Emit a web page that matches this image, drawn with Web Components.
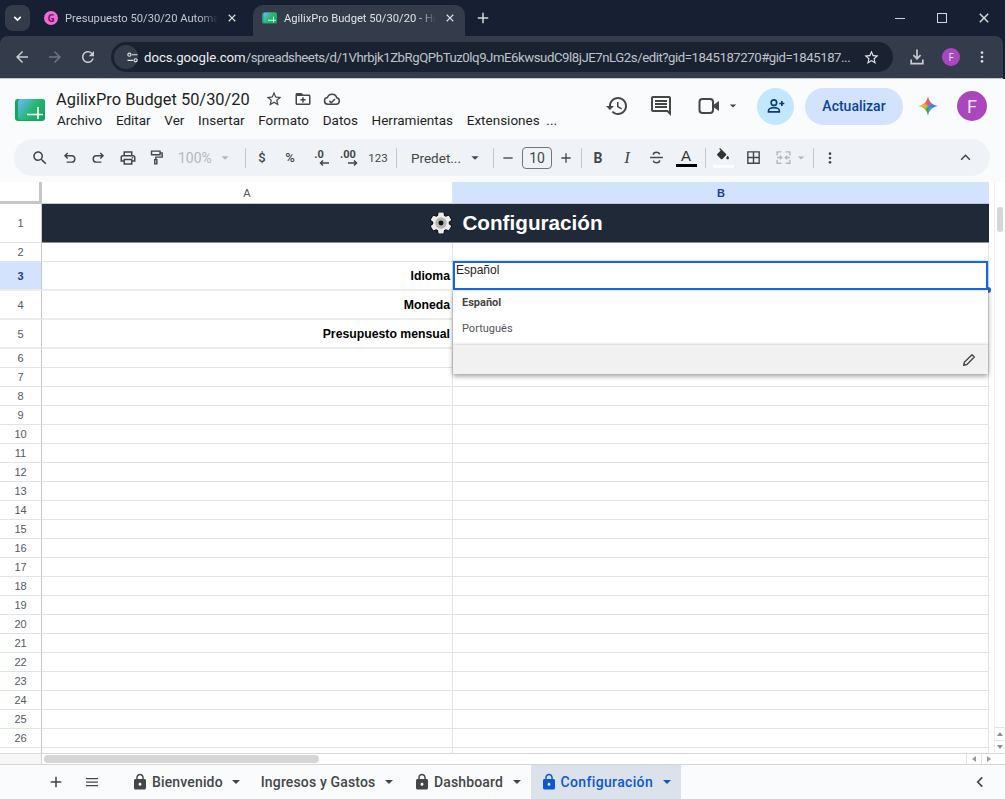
<!DOCTYPE html>
<html lang="es">
<head>
<meta charset="utf-8">
<title>AgilixPro Budget</title>
<style>
  html, body { margin: 0; height: 100%; overflow: hidden; background: #fff; }
  body { display: flex; flex-direction: column; height: 799px; font-family: Roboto, "Liberation Sans", sans-serif; }
</style>
</head>
<body>
<x-browser-tabs></x-browser-tabs>
<x-browser-toolbar></x-browser-toolbar>
<x-doc-header></x-doc-header>
<x-sheet-toolbar></x-sheet-toolbar>
<x-grid></x-grid>
<x-sheet-tabs></x-sheet-tabs>

<script>
const ICONS = {
  star: '<path d="M22 9.24l-7.19-.62L12 2 9.19 8.63 2 9.24l5.46 4.73L5.82 21 12 17.27 18.18 21l-1.63-7.03L22 9.24zM12 15.4l-3.76 2.27 1-4.28-3.32-2.88 4.38-.38L12 6.1l1.71 4.04 4.38.38-3.32 2.88 1 4.28L12 15.4z"/>',
  search: '<path d="M15.5 14h-.79l-.28-.27C15.41 12.59 16 11.11 16 9.5 16 5.91 13.09 3 9.5 3S3 5.91 3 9.5 5.91 16 9.5 16c1.61 0 3.09-.59 4.23-1.57l.27.28v.79l5 4.99L20.49 19l-4.99-5zm-6 0C7.01 14 5 11.99 5 9.5S7.01 5 9.5 5 14 7.01 14 9.5 11.99 14 9.5 14z"/>',
  undo: '<path fill="none" stroke="currentColor" stroke-width="2" d="M9.5 5.5 5.5 9.5l4 4M5.5 9.5H15a4.5 4.5 0 0 1 0 9H8"/>',
  redo: '<path fill="none" stroke="currentColor" stroke-width="2" d="M14.5 5.5l4 4-4 4M18.5 9.5H9a4.5 4.5 0 0 0 0 9h7"/>',
  print: '<path d="M19 8h-1V3H6v5H5c-1.66 0-3 1.34-3 3v6h4v4h12v-4h4v-6c0-1.66-1.34-3-3-3zM8 5h8v3H8V5zm8 12v2H8v-4h8v2zm2-2v-2H6v2H4v-4c0-.55.45-1 1-1h14c.55 0 1 .45 1 1v4h-2z"/><circle cx="18" cy="11.5" r="1"/>',
  paint: '<path fill="none" stroke="currentColor" stroke-width="2" d="M5 3h12v5H5zM17 5.5h3v6h-9V15M9.5 15h3v6h-3z"/>',
  history: '<path d="M13 3c-4.97 0-9 4.03-9 9H1l3.89 3.89.07.14L9 12H6c0-3.87 3.13-7 7-7s7 3.13 7 7-3.13 7-7 7c-1.93 0-3.68-.79-4.94-2.06l-1.42 1.42C8.27 19.99 10.51 21 13 21c4.97 0 9-4.03 9-9s-4.03-9-9-9zm-1 5v5l4.28 2.54.72-1.21-3.5-2.08V8H12z"/>',
  comment: '<path d="M21.99 4c0-1.1-.89-2-1.99-2H4c-1.1 0-2 .9-2 2v12c0 1.1.9 2 2 2h14l4 4-.01-18zM20 4v13.17L18.83 16H4V4h16zM6 12h12v2H6zm0-3h12v2H6zm0-3h12v2H6z"/>',
  video: '<rect x="2.5" y="5" width="13.5" height="14" rx="3" fill="none" stroke="currentColor" stroke-width="2"/><path d="M17 10.5l5-3.5v10l-5-3.5z"/>',
  addperson: '<circle cx="9.5" cy="8" r="3.3" fill="none" stroke="currentColor" stroke-width="2"/><path fill="none" stroke="currentColor" stroke-width="2" d="M3 19v-1.5c0-2 3.3-3.5 6.5-3.5s6.5 1.500 6.500 3.500V19zM19 6v6M16 9h6"/>',
  lock: '<path d="M18 8h-1V6c0-2.76-2.24-5-5-5S7 3.24 7 6v2H6c-1.1 0-2 .9-2 2v10c0 1.1.9 2 2 2h12c1.1 0 2-.9 2-2V10c0-1.1-.9-2-2-2zm-6 9c-1.1 0-2-.9-2-2s.9-2 2-2 2 .9 2 2-.9 2-2 2zm3.100-9H8.900V6c0-1.710 1.390-3.100 3.100-3.100 1.710 0 3.100 1.390 3.100 3.100v2z"/>',
  pencil: '<path fill="none" stroke="currentColor" stroke-width="2" stroke-linejoin="round" d="M4 20l1-4.500L16.500 4l3.500 3.500L8.500 19z"/><path d="M4 20l.8-3.600 2.800 2.800z"/>',
  menu: '<path d="M4 6.500h16v1.700H4zM4 11.200h16v1.700H4zM4 15.900h16v1.700H4z"/>',
  plus: '<path d="M19 13h-6v6h-2v-6H5v-2h6V5h2v6h6v2z"/>',
  minus: '<path d="M5 11h14v2H5z"/>',
  close: '<path d="M18.300 7.100l-1.400-1.400L12 10.600 7.100 5.700 5.700 7.100l4.900 4.900-4.900 4.900 1.400 1.400 4.900-4.900 4.900 4.900 1.400-1.400-4.900-4.900z"/>',
  down: '<path fill="none" stroke="currentColor" stroke-width="3" d="M6 9l6 6 6-6"/>',
  up: '<path fill="none" stroke="currentColor" stroke-width="2.500" d="M5 15.500l7-7 7 7"/>',
  left: '<path fill="none" stroke="currentColor" stroke-width="2.500" d="M15.500 5l-7 7 7 7"/>',
  back: '<path d="M20 11H7.830l5.590-5.590L12 4l-8 8 8 8 1.410-1.410L7.830 13H20v-2z"/>',
  forward: '<path d="M12 4l-1.410 1.410L16.170 11H4v2h12.170l-5.580 5.590L12 20l8-8z"/>',
  reload: '<path d="M17.650 6.350A7.958 7.958 0 0 0 12 4c-4.420 0-7.990 3.580-7.990 8s3.570 8 7.990 8c3.730 0 6.840-2.550 7.730-6h-2.080A5.990 5.990 0 0 1 12 18c-3.310 0-6-2.690-6-6s2.690-6 6-6c1.660 0 3.140.69 4.220 1.780L13 11h7V4l-2.350 2.350z"/>',
  tune: '<path fill="none" stroke="currentColor" stroke-width="1.800" d="M11 7.500h9M4 16.500h9"/><circle cx="7" cy="7.500" r="2.500" fill="none" stroke="currentColor" stroke-width="1.800"/><circle cx="17" cy="16.500" r="2.500" fill="none" stroke="currentColor" stroke-width="1.800"/>',
  download: '<path d="M12 15.500l-5-5 1.400-1.400 2.600 2.600V3h2v8.700l2.600-2.600 1.400 1.400z"/><path d="M4 15h2v4h12v-4h2v6H4z"/>',
  dots: '<circle cx="12" cy="5.500" r="2"/><circle cx="12" cy="12" r="2"/><circle cx="12" cy="18.500" r="2"/>',
  folder: '<path d="M20 6h-8l-2-2H4c-1.100 0-2 .9-2 2v12c0 1.100.9 2 2 2h16c1.100 0 2-.9 2-2V8c0-1.100-.9-2-2-2zm0 12H4V8h16v10zM11 9.500h2V12h2.500v2H13v2.500h-2V14H8.500v-2H11z"/>',
  cloud: '<path fill="none" stroke="currentColor" stroke-width="2" d="M6.500 19a4.500 4.500 0 0 1-.6-8.960A6.500 6.500 0 0 1 18.300 10.300 4.400 4.400 0 0 1 17.500 19z"/><path fill="none" stroke="currentColor" stroke-width="2" d="M8.500 14.500l2.500 2.500 5-5"/>',
  borders: '<path d="M3 3v18h18V3H3zm8 16H5v-6h6v6zm0-8H5V5h6v6zm8 8h-6v-6h6v6zm0-8h-6V5h6v6z"/>',
  merge: '<path fill="none" stroke="currentColor" stroke-width="2" d="M3 9V4h6M3 15v5h6M21 9V4h-6M21 15v5h-6M3 12h6m-2-2.500L9.500 12 7 14.500M21 12h-6m2-2.500L14.500 12l2.500 2.500"/>',
  fill: '<path d="M16.560 8.940L7.620 0 6.210 1.410l2.380 2.380-5.150 5.150a1.490 1.490 0 0 0 0 2.120l5.500 5.500c.29.29.68.44 1.060.44s.77-.15 1.060-.44l5.500-5.500c.59-.58.59-1.530 0-2.120z"/><path d="M19 11.500s-2 2.170-2 3.500c0 1.100.9 2 2 2s2-.9 2-2c0-1.330-2-3.500-2-3.500z"/>',
  strike: '<path fill="none" stroke="currentColor" stroke-width="2" d="M3 12h18M16.500 7.500C16 5.500 14.300 4.500 12 4.500 9.500 4.500 7.500 6 7.500 8M7.500 16.500c.5 2 2.200 3 4.500 3 2.500 0 4.500-1.500 4.500-3.500"/>'
};

class XIcon extends HTMLElement {
  connectedCallback() {
    const size = this.getAttribute('size') || 18;
    const root = this.attachShadow({ mode: 'open' });
    root.innerHTML = `
      <style>
        :host { display: inline-flex; align-items: center; justify-content: center; flex: none; }
        svg { display: block; fill: currentColor; }
      </style>
      <svg width="${size}" height="${size}" viewBox="0 0 24 24">${ICONS[this.getAttribute('name')]}</svg>`;
  }
}
customElements.define('x-icon', XIcon);

// small down triangle used all over the sheets ui
class XCaret extends HTMLElement {
  constructor() {
    super();
    this.attachShadow({ mode: 'open' }).innerHTML = `
      <style>
        :host { display: inline-block; flex: none; width: 0; height: 0;
          border-left: 4.500px solid transparent; border-right: 4.500px solid transparent;
          border-top: 4.500px solid currentColor; }
      </style>`;
  }
}
customElements.define('x-caret', XCaret);

const logoSvg = (w, h, id) => `
  <svg width="${w}" height="${h}" viewBox="0 0 30 24" style="flex:none">
    <defs><linearGradient id="${id}" x1="0" x2="1" y1="0.200" y2="0.800">
      <stop offset="0" stop-color="#62b8f0"/><stop offset="0.500" stop-color="#27b673"/><stop offset="1" stop-color="#0fa85c"/>
    </linearGradient></defs>
    <rect x="0" y="1" width="30" height="22" rx="3" fill="#12a85d"/>
    <rect x="3" y="1" width="27" height="21" rx="3" fill="url(#${id})"/>
    <path d="M12 16.500h16M23 9v12" stroke="#fff" stroke-width="1.700" fill="none"/>
  </svg>`;

class XBrowserTabs extends HTMLElement {
  constructor() {
    super();
    this.attachShadow({ mode: 'open' }).innerHTML = `
      <style>
        :host { display: flex; flex: none; height: 36px; box-sizing: border-box; padding: 5px 0 0 5px;
          background: #172032; color: #fff; font: 11.200px Roboto, sans-serif; }
        .list { width: 25px; height: 26px; border-radius: 8px; background: #343c4c; display: flex; align-items: center; justify-content: center; }
        .tab { display: flex; align-items: center; height: 31px; padding-bottom: 5px; box-sizing: border-box; }
        .t1 { width: 223px; padding-left: 14px; color: #c3c7cf; }
        .t2 { width: 212px; padding-left: 9px; background: #343c4c; border-radius: 10px 10px 0 0; color: #dfe2e7; }
        .name { white-space: nowrap; margin-left: 7px;
          -webkit-mask-image: linear-gradient(90deg, #000 88%, transparent); mask-image: linear-gradient(90deg, #000 88%, transparent); }
        .t1 .name { width: 153px; }
        .t2 .name { width: 152px; }
        .fav { width: 14px; height: 14px; border-radius: 50%; background: #f06ad8; position: relative; flex: none; display: flex; align-items: center; justify-content: center; color: #6b1c5e; font: bold 10px "Open Sans", sans-serif; }
        .tab x-icon { margin-left: 7px; color: #e3e5e9; }
        .new { margin: 0 0 0 9px; height: 26px; display: flex; align-items: center; color: #d5d8dd; }
        .win { margin-left: auto; display: flex; align-items: center; height: 26px; color: #d5d8dd; }
        .win span { width: 42px; display: flex; justify-content: center; align-items: center; }
        .mn { width: 10px; height: 1px; background: #cfd2d8; }
        .mx { width: 8px; height: 8px; border: 1px solid #d5d8dd; }
      </style>
      <div class="list"><x-icon name="down" size="13"></x-icon></div>
      <div class="tab t1"><div class="fav">G</div><div class="name">Presupuesto 50/30/20 Automat</div><x-icon name="close" size="14"></x-icon></div>
      <div class="tab t2">${logoSvg(15, 12, 'fv')}<div class="name">AgilixPro Budget 50/30/20 - Ho</div><x-icon name="close" size="14"></x-icon></div>
      <div class="new"><x-icon name="plus" size="18"></x-icon></div>
      <div class="win"><span><i class="mn"></i></span><span><i class="mx"></i></span><span><x-icon name="close" size="18"></x-icon></span></div>`;
  }
}
customElements.define('x-browser-tabs', XBrowserTabs);

class XBrowserToolbar extends HTMLElement {
  constructor() {
    super();
    this.attachShadow({ mode: 'open' }).innerHTML = `
      <style>
        :host { display: flex; flex: none; height: 43px; box-sizing: border-box; background: #172032; }
        .bar { flex: 1; margin-right: 2px; display: flex; align-items: center; background: #343c4c; border-radius: 8px 8px 0 0; border-bottom: 1px solid #c3c6cb; color: #c9ccd2; }
        .nav { width: 33px; display: flex; justify-content: center; }
        .nav:first-child { margin-left: 5px; }
        .omni { margin-left: 7px; width: 782px; height: 30px; box-sizing: border-box; background: #1a2232; border-radius: 15px; display: flex; align-items: center; }
        .tune { margin-left: 3px; width: 24px; height: 24px; border-radius: 50%; background: #343c4c; display: flex; align-items: center; justify-content: center; color: #e0e2e6; }
        .url { margin-left: 6px; width: 707px; white-space: nowrap; font: 13.200px Roboto, sans-serif; letter-spacing: -.45px; color: #bfc3ca; }
        .url b { font-weight: 400; letter-spacing: 0; color: #eef0f2; }
        .omni x-icon { margin-left: 12px; color: #e3e5e9; }
        .dl { margin-left: 14px; color: #c9ccd2; }
        .ava { margin-left: 15px; width: 18px; height: 18px; border-radius: 50%; background: #ab47bc; color: #f3d9f7; font: 10px "Open Sans", sans-serif; display: flex; align-items: center; justify-content: center; }
        .more { margin-left: 14px; color: #d7dade; }
      </style>
      <div class="bar">
        <div class="nav"><x-icon name="back" size="18"></x-icon></div>
        <div class="nav" style="color:#6d7482"><x-icon name="forward" size="18"></x-icon></div>
        <div class="nav"><x-icon name="reload" size="18"></x-icon></div>
        <div class="omni">
          <div class="tune"><x-icon name="tune" size="15"></x-icon></div>
          <div class="url"><b>docs.google.com</b>/spreadsheets/d/1Vhrbjk1ZbRgQPbTuz0lq9JmE6kwsudC9l8jJE7nLG2s/edit?gid=1845187270#gid=1845187...</div>
          <x-icon name="star" size="17"></x-icon>
        </div>
        <x-icon class="dl" name="download" size="20"></x-icon>
        <div class="ava">F</div>
        <x-icon class="more" name="dots" size="16"></x-icon>
      </div>`;
  }
}
customElements.define('x-browser-toolbar', XBrowserToolbar);

class XDocHeader extends HTMLElement {
  constructor() {
    super();
    this.attachShadow({ mode: 'open' }).innerHTML = `
      <style>
        :host { display: flex; flex: none; height: 60px; box-sizing: border-box; background: #f9fbfd; color: #1f1f1f; align-items: center; padding: 0 18px 6px 15px; }
        .logo { display: flex; margin-top: 8px; }
        .text { margin: 6px 0 0 11px; display: flex; flex-direction: column; }
        .line { display: flex; align-items: center; height: 21px; }
        .title { font: 16.400px Roboto, sans-serif; width: 209px; white-space: nowrap; }
        .line x-icon { color: #444746; margin-right: 11px; }
        .menu { display: flex; margin-top: 1px; font: 13.500px Roboto, sans-serif; gap: 13.700px; white-space: nowrap; padding-left: 1px; height: 19px; align-items: center; }
        .menu span:last-child { margin-left: -7px; }
        .right { margin-left: auto; display: flex; align-items: center; color: #444746; }
        .vid { display: flex; align-items: center; gap: 8px; }
        .share { width: 37px; height: 37px; border-radius: 50%; background: #c2e7ff; color: #0b3a7a; display: flex; align-items: center; justify-content: center; }
        .update { width: 98px; height: 37px; border-radius: 19px; background: #d3e3fd; color: #0842a0; font: 500 14px Roboto, sans-serif; display: flex; align-items: center; justify-content: center; }
        .gem { width: 20px; height: 20px; margin-left: 15px;
          background: conic-gradient(#e4534f 0deg, #a56ad0 50deg, #3b82f6 100deg, #38a7d8 140deg, #34a853 190deg, #a5c13c 235deg, #f4b23a 275deg, #ef7a3e 320deg, #e4534f 360deg);
          clip-path: path("M10 0C10.800 5.500 14 9 20 10C14 11 10.800 14.500 10 20C9.200 14.500 6 11 0 10C6 9 9.200 5.500 10 0Z"); }
        .avatar { width: 30px; height: 30px; border-radius: 50%; background: #ab47bc; color: #f6e3f9; font: 18px Roboto, sans-serif; display: flex; align-items: center; justify-content: center; }
      </style>
      <div class="logo">${logoSvg(30, 24, 'lg')}</div>
      <div class="text">
        <div class="line"><div class="title">AgilixPro Budget 50/30/20</div><x-icon name="star" size="18"></x-icon><x-icon name="folder" size="18"></x-icon><x-icon name="cloud" size="18"></x-icon></div>
        <div class="menu"><span>Archivo</span><span>Editar</span><span>Ver</span><span>Insertar</span><span>Formato</span><span>Datos</span><span>Herramientas</span><span>Extensiones</span><span>...</span></div>
      </div>
      <div class="right">
        <x-icon name="history" size="24"></x-icon>
        <x-icon name="comment" size="24" style="margin-left:20px"></x-icon>
        <div class="vid" style="margin-left:24px"><x-icon name="video" size="24"></x-icon><x-caret style="transform:scale(.8)"></x-caret></div>
        <div class="share" style="margin-left:20px"><x-icon name="addperson" size="20"></x-icon></div>
        <div class="update" style="margin-left:11px">Actualizar</div>
        <div class="gem"></div>
        <div class="avatar" style="margin-left:19px">F</div>
      </div>`;
  }
}
customElements.define('x-doc-header', XDocHeader);

class XSheetToolbar extends HTMLElement {
  constructor() {
    super();
    const tool = (w, inner, css = '') => `<span class="t" style="width:${w}px;${css}">${inner}</span>`;
    const ic = (n, s = 18) => `<x-icon name="${n}" size="${s}"></x-icon>`;
    this.attachShadow({ mode: 'open' }).innerHTML = `
      <style>
        :host { display: block; flex: none; height: 43px; box-sizing: border-box; padding: 0 15px 6px 14px; background: #f9fbfd; }
        .bar { height: 37px; background: #eff3f8; border-radius: 19px; display: flex; align-items: center; padding-left: 11px; color: #444746; font: 12px Roboto, sans-serif; }
        .t { flex: none; display: flex; align-items: center; justify-content: center; height: 26px; }
        .sep { flex: none; width: 1px; height: 20px; background: #c7c7c7; margin: 0 .5px; }
        .size { width: 30px; height: 22px; box-sizing: border-box; border: 1px solid #747775; border-radius: 4px; display: flex; align-items: center; justify-content: center; font-size: 14px; color: #444746; }
        .dec { display: flex; flex-direction: column; align-items: center; font: bold 11px Roboto, sans-serif; line-height: 9px; }
        .dec svg { display: block; margin-top: 1px; margin-left: 9px; }
        .letter { display: flex; flex-direction: column; align-items: center; gap: 1px; font: 15px "Liberation Sans", sans-serif; line-height: 15px; color: #333; }
        .swatch { height: 3px; width: 21px; }
      </style>
      <div class="bar">
        ${tool(29, ic('search', 18))}${tool(30, ic('undo', 17))}${tool(29, ic('redo', 17))}${tool(29, ic('print', 18))}${tool(28, ic('paint', 17))}
        ${tool(68, '<span style="font-size:14px;margin-right:9px">100%</span><x-caret style="transform:scale(.9)"></x-caret>', 'color:#b4b8bc;justify-content:flex-start;padding-left:8px;box-sizing:border-box')}
        <span class="t" style="width:6px"></span><span class="sep"></span>
        ${tool(16, '<span style="font-size:13px;font-weight:500">$</span>', 'margin-left:8px')}
        ${tool(36, '<span style="font-size:13px;font-weight:500">%</span>', 'margin-left:2px')}
        ${tool(22, '<span class="dec">.0<svg width="10" height="6" viewBox="0 0 10 6"><path d="M10 3H2M4 .5 1.500 3 4 5.500" fill="none" stroke="#444746" stroke-width="1.500"/></svg></span>')}
        ${tool(36, '<span class="dec">.00<svg width="10" height="6" viewBox="0 0 10 6"><path d="M0 3h8M6 .5 8.500 3 6 5.500" fill="none" stroke="#444746" stroke-width="1.500"/></svg></span>')}
        ${tool(24, '<span style="font-size:11.500px">123</span>')}
        <span class="t" style="width:5px"></span><span class="sep"></span>
        ${tool(95, '<span style="font-size:13.500px;margin-right:10px">Predet...</span><x-caret style="transform:scale(.9)"></x-caret>', 'justify-content:flex-start;padding-left:14px;box-sizing:border-box')}
        <span class="sep"></span>
        ${tool(28, ic('minus', 16))}${tool(30, '<span class="size">10</span>')}${tool(28, ic('plus', 16))}
        <span class="sep"></span>
        ${tool(22, '<b style="font:bold 14px Roboto,sans-serif">B</b>', 'margin-left:5px')}
        ${tool(36, '<i style="font:italic 500 17px \'Liberation Serif\',serif">I</i>')}
        ${tool(23, ic('strike', 17))}
        ${tool(36, '<span class="letter">A<span class="swatch" style="background:#000"></span></span>')}
        <span class="sep"></span>
        ${tool(34, '<span class="letter">' + ic('fill', 16) + '<span class="swatch" style="background:#fff"></span></span>')}
        ${tool(26, ic('borders', 17))}
        ${tool(46, ic('merge', 17) + '<x-caret style="transform:scale(.8);margin-left:5px;margin-right:-2px"></x-caret>', 'color:#b4b8bc')}
        <span class="sep"></span>
        ${tool(32, ic('dots', 16))}
        <span style="flex:1"></span>
        ${tool(30, ic('up', 15))}
        <span style="width:10px"></span>
      </div>`;
  }
}
customElements.define('x-sheet-toolbar', XSheetToolbar);

class XGrid extends HTMLElement {
  constructor() {
    super();
    const heights = { 1: 39, 2: 19, 3: 29, 4: 29, 5: 29 };
    const labels = { 3: 'Idioma', 4: 'Moneda', 5: 'Presupuesto mensual' };
    const gear = 'M19.140 12.940c.04-.3.06-.61.06-.94 0-.32-.02-.64-.07-.94l2.030-1.580c.18-.14.23-.41.12-.61l-1.920-3.320c-.12-.22-.37-.29-.59-.22l-2.390.96c-.5-.38-1.030-.7-1.620-.94l-.36-2.540c-.04-.24-.24-.41-.48-.41h-3.840c-.24 0-.43.17-.47.41l-.36 2.540c-.59.24-1.130.57-1.620.94l-2.390-.96c-.22-.08-.47 0-.59.22L2.740 8.870c-.12.21-.08.47.12.61l2.030 1.580c-.05.3-.09.63-.09.94s.02.64.07.94l-2.030 1.580c-.18.14-.23.41-.12.61l1.920 3.320c.12.22.37.29.59.22l2.390-.96c.5.38 1.030.7 1.620.94l.36 2.540c.05.24.24.41.48.41h3.840c.24 0 .44-.17.47-.41l.36-2.540c.59-.24 1.130-.56 1.620-.94l2.390.96c.22.08.47 0 .59-.22l1.920-3.320c.12-.22.07-.47-.12-.61l-2.010-1.580z';
    let rows = '';
    for (let n = 1; n <= 27; n++) {
      const h = heights[n] || 19;
      if (n === 1) {
        rows += `<div class="row" style="height:${h}px"><div class="rh">1</div>
          <div class="banner"><svg width="26" height="26" viewBox="0 0 24 24"><path fill="#000" stroke="#000" stroke-width="1.300" d="${gear}"/><path fill="#ececec" d="${gear}"/><circle cx="12" cy="12" r="5.200" fill="#b4b4b4"/><circle cx="12" cy="12" r="2.300" fill="#111"/></svg>
          <span>Configuración</span></div></div>`;
      } else {
        // row 27 is cut by the scrollbar, its number stays out of view
        rows += `<div class="row${labels[n] ? ' tall' : ''}" style="height:${h}px"><div class="rh${n === 3 ? ' sel' : ''}">${n < 27 ? n : ''}</div>
          <div class="a">${labels[n] || ''}</div><div class="b"></div></div>`;
      }
    }
    this.attachShadow({ mode: 'open' }).innerHTML = `
      <style>
        :host { display: flex; flex-direction: column; flex: 1; min-height: 0; position: relative; overflow: hidden; background: #fff; }
        .body { flex: 1; min-height: 0; display: flex; }
        .main { width: 994px; flex: none; overflow: hidden; }
        .head { display: flex; height: 22px; font: 11px "Liberation Sans", sans-serif; color: #575a5e; }
        .corner { width: 39px; flex: none; background: #fff; border-right: 3px solid #c7c7c7; border-bottom: 3px solid #c7c7c7; box-sizing: content-box; height: 19px; }
        .ca, .cb { display: flex; align-items: center; justify-content: center; box-sizing: border-box; border-bottom: 1px solid #c7c7c7; }
        .ca { width: 411px; border-right: 1px solid #e2e3e3; }
        .cb { width: 536px; background: #d3e3fd; color: #1c4587; font-weight: bold; }
        .row { display: flex; box-sizing: border-box; }
        .row > div { box-sizing: border-box; border-bottom: 1px solid #e2e3e3; }
        .tall > div { border-bottom: 2px solid #ececec; }
        .rh { width: 42px; flex: none; border-right: 1px solid #c7c7c7; display: flex; align-items: center; justify-content: center; font: 11px "Liberation Sans", sans-serif; color: #575a5e; }
        .rh.sel { background: #d3e3fd; color: #1c4587; font-weight: bold; }
        .a { width: 411px; flex: none; border-right: 1px solid #e2e3e3; display: flex; align-items: center; justify-content: flex-end; padding-right: 2px; font: bold 12.250px "Liberation Sans", sans-serif; color: #000; }
        .b { width: 536px; flex: none; border-right: 1px solid #e2e3e3; }
        .banner { width: 947px; flex: none; background: #1f2937; color: #fff; display: flex; align-items: center; justify-content: center; gap: 8px; font: bold 20.700px "Liberation Sans", sans-serif; border-bottom: 1px solid #8a8f97 !important; }
        .gutter { width: 9px; flex: none; display: flex; flex-direction: column; border-left: 1px solid #eee; box-sizing: border-box; padding-top: 25px; }
        .vt { flex: 1; position: relative; }
        .thumb { width: 6px; height: 25px; border-radius: 3px; background: #d6d6d6; position: absolute; right: 0; top: 0; }
        .vb { flex: none; height: 12px; display: flex; align-items: center; justify-content: center; color: #8e8e8e; border-top: 1px solid #e2e3e3; width: 9px; }
        .hbar { flex: none; height: 12px; box-sizing: border-box; border-top: 1px solid #d6d6d6; border-bottom: 1px solid #d6d6d6; display: flex; }
        .hl { width: 42px; flex: none; background: #f6f6f6; border-right: 1px solid #d6d6d6; box-sizing: border-box; }
        .ht { width: 924px; flex: none; }
        .hthumb { margin: 1px 0 0 2px; width: 275px; height: 8px; border-radius: 4px; background: #d6d6d6; }
        .hb { width: 14px; flex: none; display: flex; align-items: center; justify-content: center; border-left: 1px solid #e2e3e3; color: #9a9a9a; }
        .tri-l, .tri-r { width: 0; height: 0; border-top: 3px solid transparent; border-bottom: 3px solid transparent; }
        .tri-l { border-right: 4px solid currentColor; }
        .tri-r { border-left: 4px solid currentColor; }
        .tri-u, .tri-d { width: 0; height: 0; border-left: 3px solid transparent; border-right: 3px solid transparent; }
        .tri-u { border-bottom: 4px solid currentColor; }
        .tri-d { border-top: 4px solid currentColor; }
        .editor { position: absolute; z-index: 2; left: 453px; top: 79px; width: 535px; height: 29px; box-sizing: border-box; border: 2px solid #1a66d8; background: #fff; font: 12px "Liberation Sans", sans-serif; color: #222; padding: 0 1px; line-height: 14px; box-shadow: 0 0 2px rgba(26,102,216,.5); }
        .handle { position: absolute; left: 985px; top: 105px; width: 6px; height: 6px; border-radius: 50%; background: #1a66d8; }
        .popup { position: absolute; left: 453px; top: 108px; width: 535px; height: 84px; background: #fff; box-shadow: 0 2px 5px rgba(0,0,0,.4); display: flex; flex-direction: column; font: 11px Roboto, sans-serif; }
        .opt { height: 25.500px; padding-left: 9px; display: flex; align-items: center; color: #555; flex: none; }
        .opt.on { font-weight: 700; color: #444; }
        .foot { margin-top: auto; height: 30px; background: #f1f1f1; border-top: 1px solid #e4e4e4; box-shadow: 0 -1px 2px rgba(0,0,0,.08); display: flex; align-items: center; justify-content: flex-end; padding-right: 11px; color: #444; box-sizing: border-box; }
      </style>
      <div class="body">
        <div class="main">
          <div class="head"><div class="corner"></div><div class="ca">A</div><div class="cb">B</div></div>
          ${rows}
        </div>
        <div class="gutter">
          <div class="vt"><div class="thumb"></div></div>
          <div class="vb"><i class="tri-u"></i></div><div class="vb"><i class="tri-d"></i></div>
        </div>
      </div>
      <div class="hbar">
        <div class="hl"></div>
        <div class="ht"><div class="hthumb"></div></div>
        <div class="hb"><i class="tri-l"></i></div><div class="hb"><i class="tri-r"></i></div>
      </div>
      <div class="handle"></div>
      <div class="popup">
        <div class="opt on">Español</div>
        <div class="opt">Português</div>
        <div class="foot"><x-icon name="pencil" size="16"></x-icon></div>
      </div>
      <div class="editor">Español</div>`;
  }
}
customElements.define('x-grid', XGrid);

class XSheetTab extends HTMLElement {
  constructor() {
    super();
    this.attachShadow({ mode: 'open' }).innerHTML = `
      <style>
        :host { display: flex; align-items: center; height: 100%; color: #444746; font: 500 14px Roboto, sans-serif; letter-spacing: .15px; white-space: nowrap; box-sizing: border-box; padding: 0 10px; }
        :host([active]) { background: #dbe2ec; color: #0b57d0; letter-spacing: .35px; padding: 0 10px 0 9px; }
        x-caret { margin-left: 9.500px; }
        x-icon { margin-right: 3px; }
      </style>
      <x-icon name="lock" size="18" style="${this.hasAttribute('locked') ? '' : 'display:none'}"></x-icon>
      <slot></slot>
      <x-caret></x-caret>`;
  }
}
customElements.define('x-sheet-tab', XSheetTab);

class XSheetTabs extends HTMLElement {
  constructor() {
    super();
    this.attachShadow({ mode: 'open' }).innerHTML = `
      <style>
        :host { display: flex; flex: none; height: 34px; background: #f9fbfd; align-items: center; color: #444746; }
        .plus { margin-left: 47px; }
        .menu { margin-left: 18px; }
        .tabs { display: flex; height: 100%; margin-left: 20px; }
        .back { margin-left: auto; margin-right: 17px; }
      </style>
      <x-icon class="plus" name="plus" size="18"></x-icon>
      <x-icon class="menu" name="menu" size="18"></x-icon>
      <div class="tabs">
        <x-sheet-tab locked style="margin-right:.5px">Bienvenido</x-sheet-tab>
        <x-sheet-tab>Ingresos y Gastos</x-sheet-tab>
        <x-sheet-tab locked>Dashboard</x-sheet-tab>
        <x-sheet-tab locked active>Configuración</x-sheet-tab>
      </div>
      <x-icon class="back" name="left" size="16"></x-icon>`;
  }
}
customElements.define('x-sheet-tabs', XSheetTabs);
</script>
</body>
</html>
